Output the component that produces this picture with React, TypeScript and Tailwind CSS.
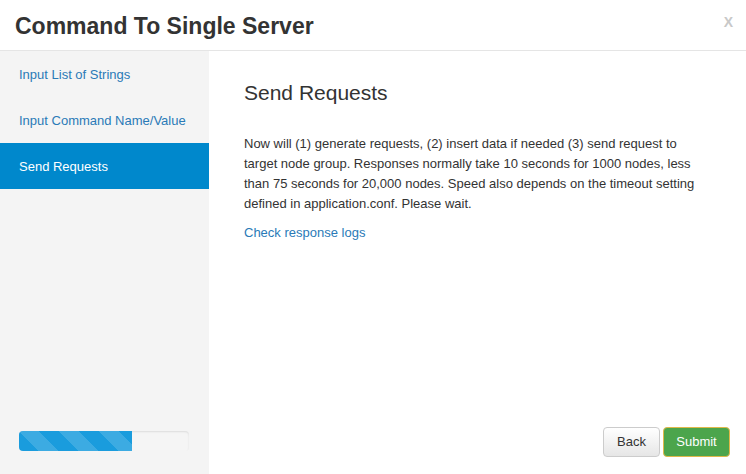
const steps = ["Input List of Strings", "Input Command Name/Value", "Send Requests"]

export default function App() {
  const active = 2

  return (
    <div className="w-[746px] h-[474px] bg-white flex flex-col font-['Liberation_Sans',Arial,sans-serif] text-[#333]">
      {/* Header */}
      <div className="h-[51px] shrink-0 flex items-center justify-between border-b border-[#e5e5e5] pl-[15px] pr-[13px]">
        <h3 className="text-[23px] font-bold leading-none pt-[2px]">Command To Single Server</h3>
        <span className="text-[14px] font-bold text-[#c8c8c8] self-start mt-[12px]">X</span>
      </div>

      <div className="flex flex-1">
        {/* Sidebar */}
        <div className="w-[209px] bg-[#f4f4f4] flex flex-col justify-between">
          <ul className="flex flex-col text-[13px]">
            {steps.map((s, i) => (
              <li
                key={s}
                className={`h-[46px] flex items-center pl-[19px] pt-[1px] ${
                  i === active ? "bg-[#0088cc] text-white" : "text-[#2a7ab7]"
                }`}
              >
                {s}
              </li>
            ))}
          </ul>
          <div className="px-[19px] pb-[23px]">
            <div className="w-[170px] h-[20px] rounded-[4px] bg-[#f5f5f5] shadow-[inset_0_1px_2px_rgba(0,0,0,0.1)] overflow-hidden">
              <div className="h-full w-[113px] bg-[#1a9cdd] bg-[linear-gradient(45deg,rgba(255,255,255,0.15)_25%,transparent_25%,transparent_50%,rgba(255,255,255,0.15)_50%,rgba(255,255,255,0.15)_75%,transparent_75%,transparent)] bg-[length:40px_40px]" />
            </div>
          </div>
        </div>

        {/* Content */}
        <div className="flex-1 flex flex-col justify-between pl-[35px] pr-[16px]">
          <div>
            <h4 className="text-[21px] leading-none mt-[31px]">Send Requests</h4>
            <p className="text-[13px] leading-[20px] mt-[31px] w-[462px]">
              Now will (1) generate requests, (2) insert data if needed (3) send request to target node group.
              Responses normally take 10 seconds for 1000 nodes, less than 75 seconds for 20,000 nodes. Speed
              also depends on the timeout setting defined in application.conf. Please wait.
            </p>
            <a className="block text-[13px] leading-[20px] mt-[9px] text-[#2a7ab7]">Check response logs</a>
          </div>
          <div className="flex justify-end gap-[3px] pb-[17px]">
            <button className="h-[30px] w-[57px] text-[13px] rounded-[4px] border border-[#ccc] bg-[linear-gradient(#fff,#e6e6e6)] text-[#333]">
              Back
            </button>
            <button className="h-[30px] w-[67px] text-[13px] rounded-[4px] border border-[#e0b84a] bg-[#4ca54c] text-white">
              Submit
            </button>
          </div>
        </div>
      </div>
    </div>
  )
}
